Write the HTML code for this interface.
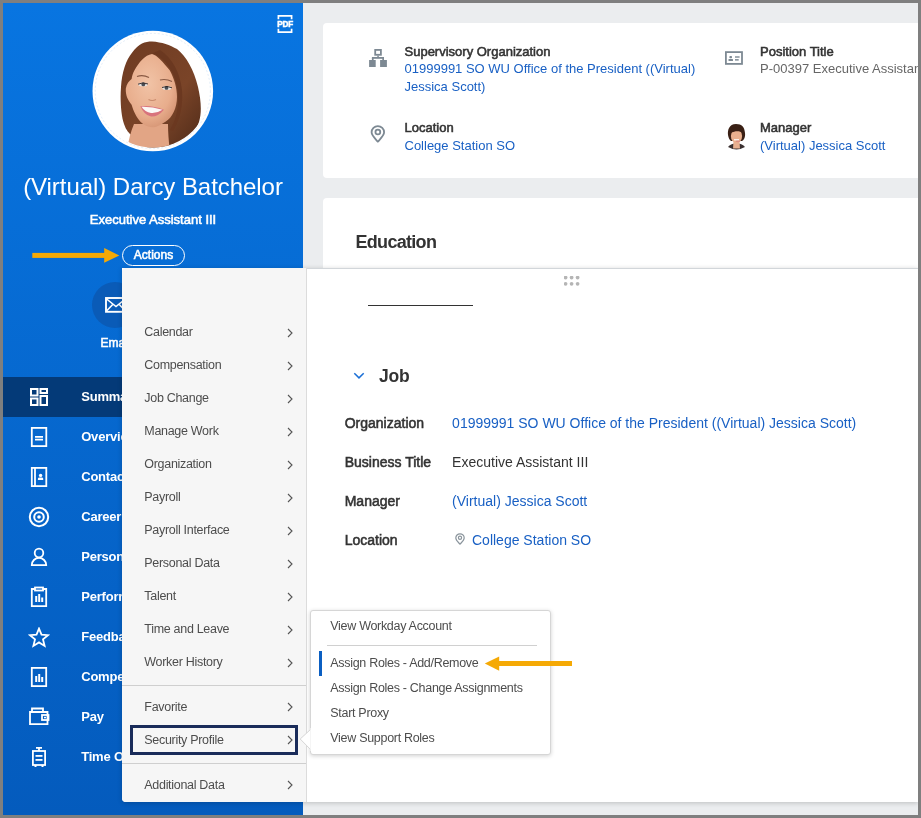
<!DOCTYPE html>
<html><head><meta charset="utf-8"><style>
html,body{margin:0;padding:0;}
body{width:921px;height:818px;background:#7f7f7f;position:relative;overflow:hidden;font-family:"Liberation Sans",sans-serif;}
.a{position:absolute;}
.t{position:absolute;white-space:nowrap;}
#clip{position:absolute;left:3px;top:3px;width:915px;height:812px;overflow:hidden;}
#in{position:absolute;left:-3px;top:-3px;width:921px;height:818px;will-change:transform;}
</style></head><body><div id="clip"><div id="in">
<div class="a" style="left:3px;top:3px;width:915px;height:812px;background:#ebedef;"></div>
<div class="a" style="left:323px;top:23px;width:640px;height:155px;background:#fff;border-radius:4px;"></div>
<div class="a" style="left:323px;top:198px;width:640px;height:590px;background:#fff;border-radius:4px;"></div>
<div class="t" style="left:355.5px;top:231px;font-size:18px;line-height:23px;color:#333;font-weight:bold;letter-spacing:-0.7px;">Education</div>
<svg class="a" style="left:368px;top:48px" width="20" height="20" viewBox="0 0 20 20"><g fill="#7d8993"><rect x="7.2" y="1.9" width="5.7" height="4.9" fill="none" stroke="#7d8993" stroke-width="1.8"/><rect x="9.3" y="7.6" width="1.5" height="1.6"/><rect x="3.9" y="9" width="12.1" height="1.8"/><rect x="3.9" y="10" width="1.7" height="2.2"/><rect x="14.3" y="10" width="1.7" height="2.2"/><rect x="1.1" y="12" width="6.6" height="7"/><rect x="12.1" y="12" width="6.8" height="7"/></g></svg>
<div class="t" style="left:404.5px;top:43px;font-size:13px;line-height:17px;color:#333;-webkit-text-stroke:0.55px #333;">Supervisory Organization</div>
<div class="t" style="left:404.5px;top:60px;font-size:13px;line-height:17px;color:#1960c4;font-weight:normal;">01999991 SO WU Office of the President ((Virtual)</div>
<div class="t" style="left:404.5px;top:78px;font-size:13px;line-height:17px;color:#1960c4;font-weight:normal;">Jessica Scott)</div>
<svg class="a" style="left:370px;top:125px" width="16" height="18" viewBox="0 0 16 18"><path d="M7.85 16.7 C5 13.5 1.6 10.5 1.6 7.35 A6.25 6.25 0 0 1 14.1 7.35 C14.1 10.5 10.7 13.5 7.85 16.7Z" fill="none" stroke="#7d8993" stroke-width="1.8" stroke-linejoin="round"/><circle cx="7.85" cy="7" r="2.4" fill="none" stroke="#7d8993" stroke-width="1.8"/></svg>
<div class="t" style="left:404.5px;top:119px;font-size:13px;line-height:17px;color:#333;-webkit-text-stroke:0.55px #333;">Location</div>
<div class="t" style="left:404.5px;top:137px;font-size:13px;line-height:17px;color:#1960c4;font-weight:normal;">College Station SO</div>
<svg class="a" style="left:724px;top:51px" width="20" height="16" viewBox="0 0 20 16"><rect x="1.9" y="1.1" width="16.1" height="11.8" fill="none" stroke="#7d8993" stroke-width="1.8"/><g fill="#7d8993"><rect x="5.4" y="4.9" width="2.6" height="2.3" rx="0.8"/><rect x="4.5" y="8" width="4.5" height="2" rx="0.5"/><rect x="11" y="5.3" width="4.6" height="1.4"/><rect x="11" y="8.1" width="3.7" height="1.5"/></g></svg>
<div class="t" style="left:760px;top:43px;font-size:13px;line-height:17px;color:#333;-webkit-text-stroke:0.55px #333;">Position Title</div>
<div class="t" style="left:760px;top:60px;font-size:13px;line-height:17px;color:#666;font-weight:normal;">P-00397 Executive Assistant III</div>
<svg class="a" style="left:720px;top:118px" width="32" height="38" viewBox="720 118 32 38"><path d="M728 147 Q731 143 736.5 143.5 Q742 143 745 147 Q740 149.5 736.5 149.5 Q733 149.5 728 147Z" fill="#3a3030"/><path d="M733.5 141 L739.5 141 L740 148.5 L733 148.5Z" fill="#e8b090"/><path d="M736 124 C729 124 727.5 130 728 135 C728.5 138 729.5 140 731 141 L742 141 C744 140 745.5 137 745 133 C744.5 127 742 124 736 124Z" fill="#3a2015"/><ellipse cx="736.5" cy="136" rx="5.6" ry="7.2" fill="#eab08e"/><path d="M730.5 133 C731 128 734 127 737 127 C740 127 742.5 129 742.5 133 C740 131 736 130.5 730.5 133Z" fill="#3a2015"/><rect x="734" y="139" width="5" height="1.5" fill="#fff" opacity="0.8"/><ellipse cx="738" cy="141.4" rx="2.4" ry="0.8" fill="#d88080" opacity="0.7"/></svg>
<div class="t" style="left:760px;top:119px;font-size:13px;line-height:17px;color:#333;-webkit-text-stroke:0.55px #333;">Manager</div>
<div class="t" style="left:760px;top:137px;font-size:13px;line-height:17px;color:#1960c4;font-weight:normal;">(Virtual) Jessica Scott</div>
<div class="a" style="left:3px;top:3px;width:300px;height:812px;background:linear-gradient(#0875e1,#045bbd);"></div>
<svg class="a" style="left:276px;top:14px" width="18" height="20" viewBox="0 0 18 20"><path d="M2.4 5.2 V1.8 H15.6 V5.2 M2.4 14.8 V18.2 H15.6 V14.8" fill="none" stroke="#fff" stroke-width="1.7"/><text x="9.2" y="13.2" font-family="Liberation Sans" font-weight="bold" font-size="8.2" fill="#fff" stroke="#fff" stroke-width="0.45" text-anchor="middle" letter-spacing="-0.2">PDF</text></svg>
<svg class="a" style="left:92px;top:30px" width="122" height="122" viewBox="92 30 122 122">
<defs><clipPath id="cp"><circle cx="152.8" cy="91" r="56.5"/></clipPath>
<radialGradient id="sk" cx="0.45" cy="0.4" r="0.65"><stop offset="0" stop-color="#f1c3a6"/><stop offset="0.7" stop-color="#e8ad8c"/><stop offset="1" stop-color="#d49373"/></radialGradient>
<linearGradient id="hr" x1="0" y1="0" x2="1" y2="1"><stop offset="0" stop-color="#6e3b22"/><stop offset="0.6" stop-color="#7a4428"/><stop offset="1" stop-color="#4e2a18"/></linearGradient></defs>
<circle cx="152.8" cy="91" r="60.3" fill="#fff"/>
<g clip-path="url(#cp)">
<path d="M152 41.4 C162 42 170 45 177 49 C186 56 194 70 198 86.9 C201 100 202 112 199 122 C195 134 184 143 172 150 L150 150 L133 136 C129 134 126 130 124 124 C121 115 120 100 121 86.9 C122 72 126 60 132 52.7 C139 43 145 41.5 152 41.4 Z" fill="url(#hr)"/>
<path d="M127 152 C128 143 130 133 134 124 L168 124 C168 134 169 143 170 152 Z" fill="#e2a585"/>
<path d="M134.5 70.3 C139 62 145 55 152 54 C157 55 163 62 169.7 70.3 C174 78 177 88 177 97 C177 108 172 118 165.8 121.4 C160 125 156 127.5 152 127.3 C147 127 142 124 139 120 C135 115 132.5 108 131.6 104.8 C128 100 125.5 96 125.8 88.8 C126.5 84 129 81 131.6 79 C132 76 133 73 134.5 70.3 Z" fill="url(#sk)"/>
<path d="M152 53.5 C160 55 167 63 172 72 C176 80 178 90 178 100 C178 110 176 120 170 130 L173 131 C181 118 183 104 182 90 C180 72 172 58 160 50 Z" fill="#6b3820"/>
<path d="M137 76.5 Q143 74.5 149 77.5" fill="none" stroke="#8a5a44" stroke-width="1.2"/>
<path d="M160 80 Q166 78.5 172 81.5" fill="none" stroke="#8a5a44" stroke-width="1.2"/>
<ellipse cx="143" cy="84.4" rx="4.6" ry="1.9" fill="#e8e4e2"/><circle cx="143.3" cy="84.4" r="1.9" fill="#4a4f55"/>
<path d="M138 84.2 Q143 81.6 148 84" fill="none" stroke="#2a2020" stroke-width="0.9"/>
<ellipse cx="166.8" cy="87.9" rx="4.6" ry="1.9" fill="#e8e4e2"/><circle cx="166.5" cy="87.9" r="1.9" fill="#4a4f55"/>
<path d="M162 87.5 Q167 85.2 172 87.8" fill="none" stroke="#2a2020" stroke-width="0.9"/>
<path d="M148.5 99.5 Q152 101.5 156 99.5" fill="none" stroke="#c88a6c" stroke-width="1.1"/>
<path d="M140.4 106.2 Q152 105 163.9 109.7 Q158 117 151 116.5 Q144 115 140.4 106.2 Z" fill="#d8737c"/>
<path d="M141.5 106.8 Q152 106.5 162.5 109.8 Q157 113.5 151 113 Q145 112 141.5 106.8 Z" fill="#fbf8f6"/>
</g>
<circle cx="152.8" cy="91" r="57.6" fill="none" stroke="#cfe0f5" stroke-width="0.6" stroke-dasharray="2 2"/>
</svg>
<div class="t" style="left:0px;top:171px;font-size:24px;line-height:31px;color:#fff;font-weight:normal;letter-spacing:-0.05px;width:306px;text-align:center;">(Virtual) Darcy Batchelor</div>
<div class="t" style="left:0px;top:211px;font-size:13px;line-height:17px;color:#fff;-webkit-text-stroke:0.55px #fff;width:306px;text-align:center;">Executive Assistant III</div>
<div class="a" style="left:122px;top:245px;width:63px;height:21px;border:1.5px solid #fff;border-radius:11px;box-sizing:border-box;"></div>
<div class="t" style="left:122px;top:247px;font-size:12px;line-height:16px;color:#fff;-webkit-text-stroke:0.55px #fff;width:63px;text-align:center;">Actions</div>
<svg class="a" style="left:30px;top:245px" width="92" height="22" viewBox="0 0 92 22"><rect x="2.3" y="7.9" width="73" height="5" fill="#f5a905"/><path d="M74.2 3 L89.3 10.4 L74.2 17.8Z" fill="#f5a905"/></svg>
<svg class="a" style="left:92px;top:282px" width="46" height="46" viewBox="0 0 46 46"><circle cx="23" cy="23" r="23" fill="#0a5bb7"/><rect x="14" y="16" width="20" height="13.8" fill="none" stroke="#fff" stroke-width="1.9"/><path d="M14 16.5 L24 24.5 L34 16.5 M14 29.5 L20.5 22.8 M34 29.5 L27.5 22.8" fill="none" stroke="#fff" stroke-width="1.6"/></svg>
<div class="t" style="left:100.4px;top:335px;font-size:12px;line-height:16px;color:#fff;-webkit-text-stroke:0.55px #fff;">Email</div>
<div class="a" style="left:3px;top:377px;width:300px;height:40px;background:#043a78;"></div>
<div class="t" style="left:81.2px;top:388px;font-size:13px;line-height:17px;color:#fff;font-weight:bold;letter-spacing:-0.2px;">Summary</div>
<div class="t" style="left:81.2px;top:428px;font-size:13px;line-height:17px;color:#fff;font-weight:bold;letter-spacing:-0.2px;">Overview</div>
<div class="t" style="left:81.2px;top:468px;font-size:13px;line-height:17px;color:#fff;font-weight:bold;letter-spacing:-0.2px;">Contact</div>
<div class="t" style="left:81.2px;top:508px;font-size:13px;line-height:17px;color:#fff;font-weight:bold;letter-spacing:-0.2px;">Career</div>
<div class="t" style="left:81.2px;top:548px;font-size:13px;line-height:17px;color:#fff;font-weight:bold;letter-spacing:-0.2px;">Personal</div>
<div class="t" style="left:81.2px;top:588px;font-size:13px;line-height:17px;color:#fff;font-weight:bold;letter-spacing:-0.2px;">Performance</div>
<div class="t" style="left:81.2px;top:628px;font-size:13px;line-height:17px;color:#fff;font-weight:bold;letter-spacing:-0.2px;">Feedback</div>
<div class="t" style="left:81.2px;top:668px;font-size:13px;line-height:17px;color:#fff;font-weight:bold;letter-spacing:-0.2px;">Compensation</div>
<div class="t" style="left:81.2px;top:708px;font-size:13px;line-height:17px;color:#fff;font-weight:bold;letter-spacing:-0.2px;">Pay</div>
<div class="t" style="left:81.2px;top:748px;font-size:13px;line-height:17px;color:#fff;font-weight:bold;letter-spacing:-0.2px;">Time Off</div>
<svg class="a" style="left:30px;top:388px" width="18" height="18" viewBox="0 0 18 18"><g fill="none" stroke="#fff" stroke-width="2"><rect x="1" y="1" width="6.5" height="6.5"/><rect x="10.5" y="1" width="6.5" height="4"/><rect x="1" y="10.5" width="6.5" height="6.5"/><rect x="10.5" y="8" width="6.5" height="9"/></g></svg>
<svg class="a" style="left:30px;top:427px" width="18" height="20" viewBox="0 0 18 20"><g fill="none" stroke="#fff" stroke-width="1.8"><rect x="1.8" y="0.9" width="14.5" height="18.2"/><path d="M5 9.9 H13 M5 12.7 H13" stroke-width="1.7"/></g></svg>
<svg class="a" style="left:30px;top:467px" width="18" height="20" viewBox="0 0 18 20"><g fill="none" stroke="#fff" stroke-width="1.8"><rect x="1.8" y="0.9" width="14.5" height="18.2"/><path d="M5 1 V19"/><circle cx="10.6" cy="8.4" r="1.7" fill="#fff" stroke="none"/><path d="M7.9 13 V11.8 Q7.9 10.4 9.5 10.4 H11.7 Q13.2 10.4 13.2 11.8 V13 Z" fill="#fff" stroke="none"/></g></svg>
<svg class="a" style="left:28px;top:506px" width="22" height="22" viewBox="0 0 22 22"><g fill="none" stroke="#fff" stroke-width="2"><circle cx="11" cy="11" r="9.2"/><circle cx="11" cy="11" r="4.8"/></g><circle cx="11" cy="11" r="1.8" fill="#fff"/></svg>
<svg class="a" style="left:30px;top:547px" width="18" height="20" viewBox="0 0 18 20"><g fill="none" stroke="#fff" stroke-width="1.8"><circle cx="9" cy="6" r="4.3"/><path d="M1.8 18.1 A7.2 7.2 0 0 1 16.2 18.1 Z"/></g></svg>
<svg class="a" style="left:30px;top:586px" width="18" height="22" viewBox="0 0 18 22"><g fill="none" stroke="#fff" stroke-width="1.8"><path d="M5 3 H1.8 V20.1 H16.2 V3 H13"/><rect x="5" y="1.5" width="8" height="3"/></g><g fill="#fff"><rect x="5.2" y="10" width="2" height="6"/><rect x="8.2" y="8" width="2" height="8"/><rect x="11.2" y="11.5" width="2" height="4.5"/></g></svg>
<svg class="a" style="left:28px;top:627px" width="22" height="21" viewBox="0 0 22 21"><path d="M11 1.6 L13.5 7.7 L20 8.2 L15 12.4 L16.6 18.9 L11 15.4 L5.4 18.9 L7 12.4 L2 8.2 L8.5 7.7Z" fill="none" stroke="#fff" stroke-width="1.8" stroke-linejoin="miter"/></svg>
<svg class="a" style="left:30px;top:666px" width="18" height="22" viewBox="0 0 18 22"><g fill="none" stroke="#fff" stroke-width="1.8"><rect x="1.8" y="1.9" width="14.4" height="18.2"/></g><g fill="#fff"><rect x="5.2" y="10" width="2" height="6"/><rect x="8.2" y="8" width="2" height="8"/><rect x="11.2" y="11" width="2" height="5"/></g></svg>
<svg class="a" style="left:28px;top:706px" width="22" height="20" viewBox="0 0 22 20"><g fill="none" stroke="#fff" stroke-width="1.8"><path d="M2 6 H19.5 V18.2 H2 Z"/><path d="M4 6 V2.5 H15 V6"/><rect x="14" y="9" width="6.5" height="5"/></g><rect x="16" y="10.8" width="2" height="1.5" fill="#fff"/></svg>
<svg class="a" style="left:31px;top:746px" width="16" height="22" viewBox="0 0 16 22"><g fill="none" stroke="#fff" stroke-width="1.8"><rect x="1.9" y="5" width="12.2" height="14"/><path d="M5 1.8 H11 M8 1.8 V5"/></g><g fill="#fff"><rect x="4.5" y="9" width="7" height="1.8"/><rect x="4.5" y="13" width="7" height="1.8"/><rect x="3.5" y="19" width="2" height="2"/><rect x="10.5" y="19" width="2" height="2"/></g></svg>
<div class="a" style="left:122px;top:268px;width:796px;height:534px;background:#fff;box-shadow:0 1px 5px rgba(0,0,0,0.2);border-radius:0 0 0 4px;"></div>
<div class="a" style="left:122px;top:268px;width:184px;height:534px;background:#f6f6f6;border-right:1px solid #dcdcdc;border-radius:4px 0 0 4px;"></div>
<div class="a" style="left:307px;top:268px;width:611px;height:1px;background:#d2d6da;"></div>
<svg class="a" style="left:564px;top:276px" width="16" height="11" viewBox="0 0 16 11"><g fill="#b5b5b5"><circle cx="1.6" cy="1.6" r="1.85"/><circle cx="1.6" cy="7.800000000000001" r="1.85"/><circle cx="7.6" cy="1.6" r="1.85"/><circle cx="7.6" cy="7.800000000000001" r="1.85"/><circle cx="13.6" cy="1.6" r="1.85"/><circle cx="13.6" cy="7.800000000000001" r="1.85"/></g></svg>
<div class="a" style="left:368px;top:305px;width:105px;height:1px;background:#333;"></div>
<svg class="a" style="left:352px;top:371px" width="14" height="9" viewBox="0 0 14 9"><path d="M2.3 2.2 L7 6.9 L11.7 2.2" fill="none" stroke="#1a6fd6" stroke-width="1.5"/></svg>
<div class="t" style="left:379.1px;top:365px;font-size:17.5px;line-height:23px;color:#333;font-weight:bold;letter-spacing:-0.3px;">Job</div>
<div class="t" style="left:344.7px;top:414px;font-size:14px;line-height:18px;color:#333;-webkit-text-stroke:0.55px #333;">Organization</div>
<div class="t" style="left:452.1px;top:414px;font-size:14px;line-height:18px;color:#1960c4;font-weight:normal;">01999991 SO WU Office of the President ((Virtual) Jessica Scott)</div>
<div class="t" style="left:344.7px;top:453px;font-size:14px;line-height:18px;color:#333;-webkit-text-stroke:0.55px #333;">Business Title</div>
<div class="t" style="left:452.1px;top:453px;font-size:14px;line-height:18px;color:#333;font-weight:normal;">Executive Assistant III</div>
<div class="t" style="left:344.7px;top:492px;font-size:14px;line-height:18px;color:#333;-webkit-text-stroke:0.55px #333;">Manager</div>
<div class="t" style="left:452.1px;top:492px;font-size:14px;line-height:18px;color:#1960c4;font-weight:normal;">(Virtual) Jessica Scott</div>
<div class="t" style="left:344.7px;top:531px;font-size:14px;line-height:18px;color:#333;-webkit-text-stroke:0.55px #333;">Location</div>
<svg class="a" style="left:455px;top:533px" width="11" height="12" viewBox="0 0 11 12"><path d="M5 11.2 C3 9 0.8 7.2 0.8 5 A4.2 4.2 0 0 1 9.2 5 C9.2 7.2 7 9 5 11.2Z" fill="none" stroke="#8a949c" stroke-width="1.2" stroke-linejoin="round"/><circle cx="5" cy="4.8" r="1.6" fill="none" stroke="#8a949c" stroke-width="1.2"/></svg>
<div class="t" style="left:472px;top:531px;font-size:14px;line-height:18px;color:#1960c4;font-weight:normal;">College Station SO</div>
<div class="t" style="left:144.3px;top:324px;font-size:12.5px;line-height:16px;color:#4d4d4d;font-weight:normal;letter-spacing:-0.3px;">Calendar</div>
<svg class="a" style="left:286px;top:327.5px" width="8" height="10" viewBox="0 0 8 10"><path d="M2 1 L6 5 L2 9" fill="none" stroke="#555" stroke-width="1.1"/></svg>
<div class="t" style="left:144.3px;top:357px;font-size:12.5px;line-height:16px;color:#4d4d4d;font-weight:normal;letter-spacing:-0.3px;">Compensation</div>
<svg class="a" style="left:286px;top:360.5px" width="8" height="10" viewBox="0 0 8 10"><path d="M2 1 L6 5 L2 9" fill="none" stroke="#555" stroke-width="1.1"/></svg>
<div class="t" style="left:144.3px;top:390px;font-size:12.5px;line-height:16px;color:#4d4d4d;font-weight:normal;letter-spacing:-0.3px;">Job Change</div>
<svg class="a" style="left:286px;top:393.5px" width="8" height="10" viewBox="0 0 8 10"><path d="M2 1 L6 5 L2 9" fill="none" stroke="#555" stroke-width="1.1"/></svg>
<div class="t" style="left:144.3px;top:423px;font-size:12.5px;line-height:16px;color:#4d4d4d;font-weight:normal;letter-spacing:-0.3px;">Manage Work</div>
<svg class="a" style="left:286px;top:426.5px" width="8" height="10" viewBox="0 0 8 10"><path d="M2 1 L6 5 L2 9" fill="none" stroke="#555" stroke-width="1.1"/></svg>
<div class="t" style="left:144.3px;top:456px;font-size:12.5px;line-height:16px;color:#4d4d4d;font-weight:normal;letter-spacing:-0.3px;">Organization</div>
<svg class="a" style="left:286px;top:459.5px" width="8" height="10" viewBox="0 0 8 10"><path d="M2 1 L6 5 L2 9" fill="none" stroke="#555" stroke-width="1.1"/></svg>
<div class="t" style="left:144.3px;top:489px;font-size:12.5px;line-height:16px;color:#4d4d4d;font-weight:normal;letter-spacing:-0.3px;">Payroll</div>
<svg class="a" style="left:286px;top:492.5px" width="8" height="10" viewBox="0 0 8 10"><path d="M2 1 L6 5 L2 9" fill="none" stroke="#555" stroke-width="1.1"/></svg>
<div class="t" style="left:144.3px;top:522px;font-size:12.5px;line-height:16px;color:#4d4d4d;font-weight:normal;letter-spacing:-0.3px;">Payroll Interface</div>
<svg class="a" style="left:286px;top:525.5px" width="8" height="10" viewBox="0 0 8 10"><path d="M2 1 L6 5 L2 9" fill="none" stroke="#555" stroke-width="1.1"/></svg>
<div class="t" style="left:144.3px;top:555px;font-size:12.5px;line-height:16px;color:#4d4d4d;font-weight:normal;letter-spacing:-0.3px;">Personal Data</div>
<svg class="a" style="left:286px;top:558.5px" width="8" height="10" viewBox="0 0 8 10"><path d="M2 1 L6 5 L2 9" fill="none" stroke="#555" stroke-width="1.1"/></svg>
<div class="t" style="left:144.3px;top:588px;font-size:12.5px;line-height:16px;color:#4d4d4d;font-weight:normal;letter-spacing:-0.3px;">Talent</div>
<svg class="a" style="left:286px;top:591.5px" width="8" height="10" viewBox="0 0 8 10"><path d="M2 1 L6 5 L2 9" fill="none" stroke="#555" stroke-width="1.1"/></svg>
<div class="t" style="left:144.3px;top:621px;font-size:12.5px;line-height:16px;color:#4d4d4d;font-weight:normal;letter-spacing:-0.3px;">Time and Leave</div>
<svg class="a" style="left:286px;top:624.5px" width="8" height="10" viewBox="0 0 8 10"><path d="M2 1 L6 5 L2 9" fill="none" stroke="#555" stroke-width="1.1"/></svg>
<div class="t" style="left:144.3px;top:654px;font-size:12.5px;line-height:16px;color:#4d4d4d;font-weight:normal;letter-spacing:-0.3px;">Worker History</div>
<svg class="a" style="left:286px;top:657.5px" width="8" height="10" viewBox="0 0 8 10"><path d="M2 1 L6 5 L2 9" fill="none" stroke="#555" stroke-width="1.1"/></svg>
<div class="a" style="left:122px;top:685px;width:184px;height:1px;background:#cfcfcf;"></div>
<div class="t" style="left:144.3px;top:699px;font-size:12.5px;line-height:16px;color:#4d4d4d;font-weight:normal;letter-spacing:-0.3px;">Favorite</div>
<svg class="a" style="left:286px;top:702px" width="8" height="10" viewBox="0 0 8 10"><path d="M2 1 L6 5 L2 9" fill="none" stroke="#555" stroke-width="1.1"/></svg>
<div class="a" style="left:130px;top:725px;width:168px;height:30px;border:3px solid #1a2c5a;box-sizing:border-box;"></div>
<div class="t" style="left:144.3px;top:732px;font-size:12.5px;line-height:16px;color:#4d4d4d;font-weight:normal;letter-spacing:-0.3px;">Security Profile</div>
<svg class="a" style="left:286px;top:735px" width="8" height="10" viewBox="0 0 8 10"><path d="M2 1 L6 5 L2 9" fill="none" stroke="#555" stroke-width="1.1"/></svg>
<div class="a" style="left:122px;top:763px;width:184px;height:1px;background:#cfcfcf;"></div>
<div class="t" style="left:144.3px;top:777px;font-size:12.5px;line-height:16px;color:#4d4d4d;font-weight:normal;letter-spacing:-0.3px;">Additional Data</div>
<svg class="a" style="left:286px;top:780px" width="8" height="10" viewBox="0 0 8 10"><path d="M2 1 L6 5 L2 9" fill="none" stroke="#555" stroke-width="1.1"/></svg>
<div class="a" style="left:310px;top:610px;width:241px;height:145px;background:#fff;border:1px solid #d6d6d6;border-radius:3px;box-shadow:0 1px 4px rgba(0,0,0,0.18);box-sizing:border-box;"></div>
<svg class="a" style="left:299px;top:728px" width="14" height="23" viewBox="0 0 14 23"><path d="M11.5 1.5 L1.2 11 L11.5 21.5" fill="#fff" stroke="#d6d6d6" stroke-width="1"/><rect x="11.5" y="0" width="2.5" height="23" fill="#fff"/></svg>
<div class="t" style="left:330.3px;top:618px;font-size:12.5px;line-height:16px;color:#4d4d4d;font-weight:normal;letter-spacing:-0.3px;">View Workday Account</div>
<div class="a" style="left:327px;top:645px;width:210px;height:1px;background:#d0d0d0;"></div>
<div class="a" style="left:319px;top:651px;width:3px;height:25px;background:#0b5fc2;"></div>
<div class="t" style="left:330.3px;top:655px;font-size:12.5px;line-height:16px;color:#4d4d4d;font-weight:normal;letter-spacing:-0.3px;">Assign Roles - Add/Remove</div>
<div class="t" style="left:330.3px;top:680px;font-size:12.5px;line-height:16px;color:#4d4d4d;font-weight:normal;letter-spacing:-0.3px;">Assign Roles - Change Assignments</div>
<div class="t" style="left:330.3px;top:705px;font-size:12.5px;line-height:16px;color:#4d4d4d;font-weight:normal;letter-spacing:-0.3px;">Start Proxy</div>
<div class="t" style="left:330.3px;top:730px;font-size:12.5px;line-height:16px;color:#4d4d4d;font-weight:normal;letter-spacing:-0.3px;">View Support Roles</div>
<svg class="a" style="left:482px;top:654px" width="92" height="18" viewBox="0 0 92 18"><rect x="14" y="7" width="76" height="5" fill="#f5a905"/><path d="M2.8 9.5 L17.2 2.4 L17.2 16.7Z" fill="#f5a905"/></svg>
</div></div></body></html>
